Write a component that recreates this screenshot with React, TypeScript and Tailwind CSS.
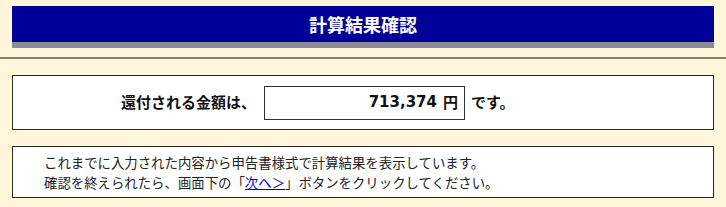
export default function App() {
  return (
    <div
      className="w-[726px] h-[207px] bg-[#fff6dc] overflow-hidden"
      style={{ fontFamily: '"Noto Sans CJK JP", "Liberation Sans", sans-serif' }}
    >
      {/* title bar */}
      <div className="pt-[6px] px-[12px]">
        <div className="h-[42px] bg-[#000099] border-b-[6px] border-[#8c8c98] flex items-center justify-center">
          <h1 className="text-white font-bold text-[18px] leading-none">計算結果確認</h1>
        </div>
      </div>

      <div className="mt-[9px] h-[2px] bg-[#8b8273]" />

      {/* amount */}
      <div className="px-[12px] pt-[16px]">
        <div className="h-[55px] bg-white border border-[#2e2a22] flex items-center pl-[108px]">
          <span className="text-[15px] font-bold text-[#111]">還付される金額は、</span>
          <div className="ml-[8px] w-[201px] h-[34px] border border-[#333] flex items-center justify-end pr-[6px]">
            <span className="text-[15px] font-bold text-[#111] font-['DejaVu_Sans',sans-serif]">713,374</span>
            <span className="ml-[6px] text-[15px] font-bold text-[#111]">円</span>
          </div>
          <span className="ml-[6px] text-[15px] font-bold text-[#111]">です。</span>
        </div>
      </div>

      {/* note */}
      <div className="px-[12px] pt-[16px]">
        <div className="h-[52px] bg-white border border-[#2e2a22] flex flex-col justify-center pl-[31px] text-[13.4px] leading-[20px] text-[#222]">
          <p>これまでに入力された内容から申告書様式で計算結果を表示しています。</p>
          <p>
            確認を終えられたら、画面下の「
            <a href="#" className="text-[#0000cc] underline">次へ＞</a>
            」ボタンをクリックしてください。
          </p>
        </div>
      </div>
    </div>
  );
}
